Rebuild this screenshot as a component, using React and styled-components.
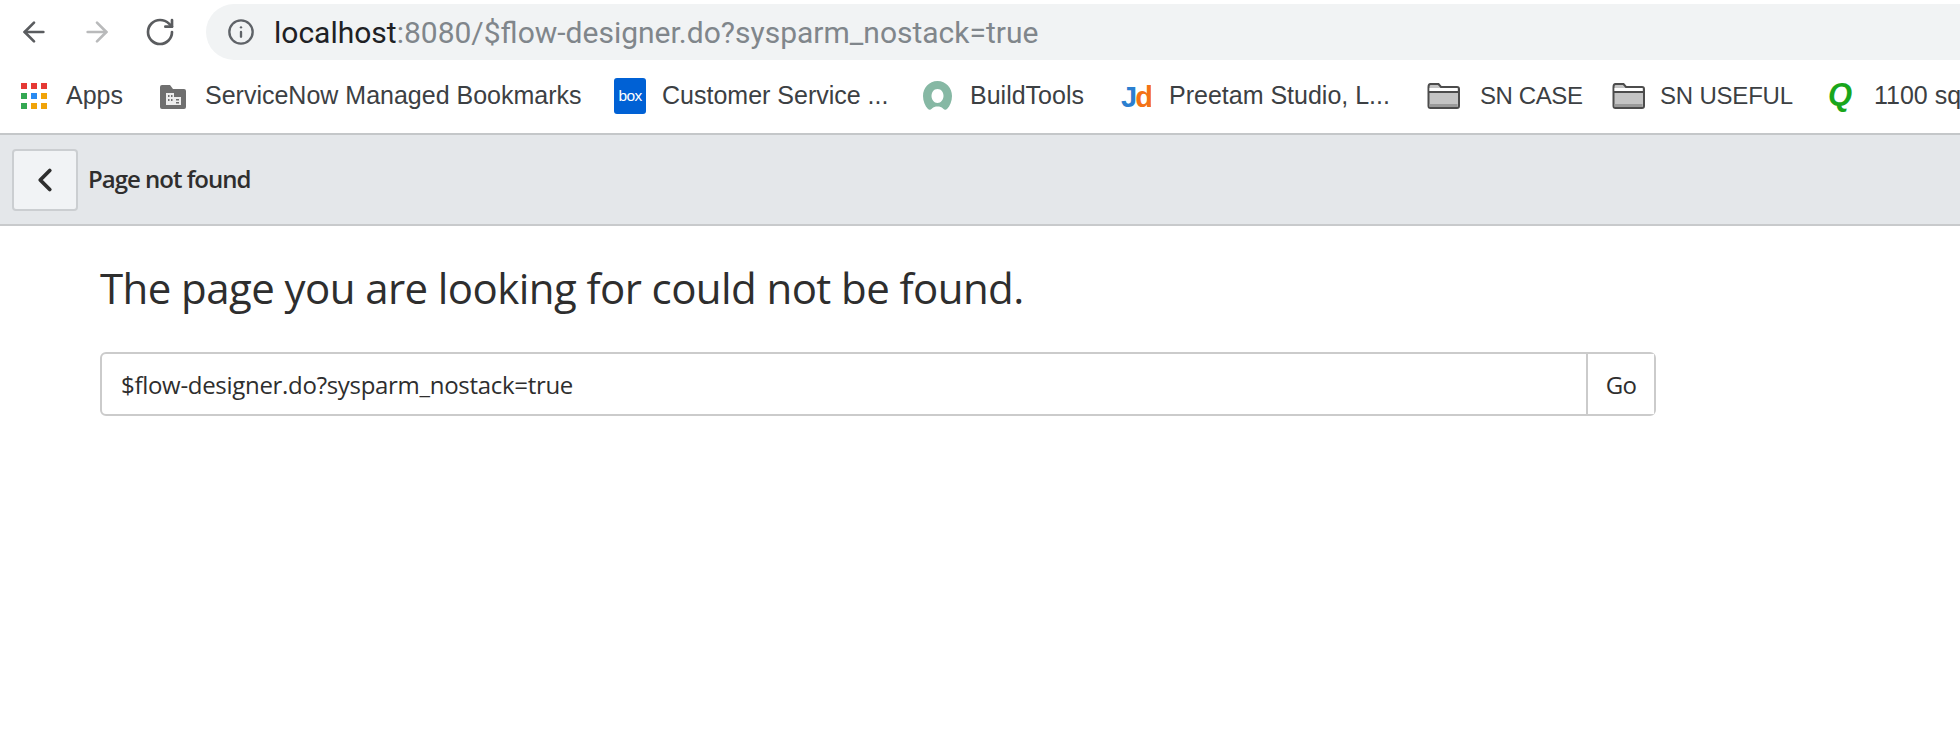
import React from "react";
import styled, { createGlobalStyle } from "styled-components";
import { ArrowLeft, ArrowRight, RotateCw, Info, ChevronLeft } from "lucide-react";

const GlobalStyle = createGlobalStyle`
  html, body {
    margin: 0;
    padding: 0;
    background: #fff;
    overflow: hidden;
  }
`;

const Page = styled.div`
  width: 1960px;
  height: 752px;
  overflow: hidden;
  background: #fff;
`;

const Toolbar = styled.div`
  display: flex;
  align-items: center;
  height: 64px;
  padding-left: 18px;
  box-sizing: border-box;
`;

const NavButton = styled.button`
  display: flex;
  align-items: center;
  justify-content: center;
  width: 32px;
  height: 32px;
  padding: 0;
  margin-right: 31px;
  border: 0;
  background: none;
  color: ${(p) => (p.$disabled ? "#b9babb" : "#5a5c5f")};
`;

const AddressBar = styled.div`
  flex: 1;
  display: flex;
  align-items: center;
  height: 56px;
  margin-left: -1px;
  padding-left: 21px;
  border-radius: 28px 0 0 28px;
  background: #f1f3f4;
  color: #5f6368;
  font: 400 30px Roboto, sans-serif;
`;

const Host = styled.span`
  margin-left: 19px;
  color: #202124;
`;

const Rest = styled.span`
  color: #80868b;
`;

const BookmarkBar = styled.div`
  display: flex;
  align-items: center;
  height: 69px;
  padding: 0 0 6px 21px;
  box-sizing: border-box;
  white-space: nowrap;
  overflow: hidden;
`;

const Bookmark = styled.div`
  flex: none;
  display: flex;
  align-items: center;
  gap: ${(p) => p.$gap || 18}px;
  width: ${(p) => p.$width}px;
  color: #3c4043;
  font: 400 ${(p) => p.$size || 25}px "Liberation Sans", Arial, sans-serif;
  letter-spacing: ${(p) => p.$spacing || 0}px;
`;

const Header = styled.div`
  display: flex;
  align-items: center;
  gap: 11px;
  height: 93px;
  padding-left: 12px;
  box-sizing: border-box;
  background: #e4e7ea;
  border-top: 2px solid #c4c7c9;
  border-bottom: 2px solid #c8cacc;
`;

const BackButton = styled.button`
  display: flex;
  align-items: center;
  justify-content: center;
  width: 66px;
  height: 62px;
  padding: 0;
  box-sizing: border-box;
  background: #f1f3f5;
  border: 2px solid #cbced1;
  border-radius: 4px;
  color: #2e2e2e;
`;

const Title = styled.h1`
  margin: 0 0 2px -1px;
  color: #2e2e2e;
  font: 600 24px "Open Sans", sans-serif;
  letter-spacing: -1px;
`;

const Content = styled.main`
  padding: 33px 0 0 100px;
`;

const Heading = styled.h2`
  margin: 0 0 35px;
  color: #2e2e2e;
  font: 400 42px/58px "Open Sans", sans-serif;
  letter-spacing: -0.58px;
`;

const SearchGroup = styled.form`
  display: flex;
  width: 1556px;
  height: 64px;
  box-sizing: border-box;
  border: 2px solid #cbcbcb;
  border-radius: 6px;
`;

const SearchInput = styled.div`
  flex: 1;
  display: flex;
  align-items: center;
  padding-left: 19px;
  color: #2e2e2e;
  font: 400 24px "Open Sans", sans-serif;
  letter-spacing: -0.3px;
`;

const GoButton = styled.button`
  width: 68px;
  padding: 0;
  border: 0;
  border-left: 2px solid #cbcbcb;
  background: #fff;
  color: #2e2e2e;
  font: 400 24px "Open Sans", sans-serif;
  letter-spacing: -0.6px;
`;

const AppsIcon = () => {
  const colors = ["#e53935", "#e53935", "#e53935", "#34a853", "#2a8af0", "#f0a30a", "#34a853", "#f0a30a", "#f0a30a"];
  return (
    <svg width="26" height="26" viewBox="0 0 26 26">
      {colors.map((c, i) => (
        <rect key={i} x={(i % 3) * 10} y={Math.floor(i / 3) * 10} width="6" height="6" fill={c} />
      ))}
    </svg>
  );
};

const BuildingIcon = () => (
  <svg width="28" height="28" viewBox="0 0 28 28">
    <path d="M1 5q0-2 2-2h8l3 4h11q2 0 2 2v16q0 2-2 2H3q-2 0-2-2z" fill="#6f6f6f" />
    <path d="M7 11h8v12H7zM15 15h7v8h-7z" fill="#eee" />
    <path d="M9 13h1.5v2H9zM12 13h1.5v2H12zM9 17h1.5v2H9zM12 17h1.5v2H12zM17 17h3v1.5h-3zM17 20h3v1.5h-3z" fill="#6f6f6f" />
  </svg>
);

const BoxIcon = () => (
  <svg width="32" height="36" viewBox="0 0 32 36">
    <rect width="32" height="36" rx="3" fill="#0061d5" />
    <text x="16" y="23" textAnchor="middle" fill="#fff" fontFamily="Liberation Sans, sans-serif" fontSize="15.500" letterSpacing="-0.6">box</text>
  </svg>
);

const RingIcon = () => (
  <svg width="31" height="32" viewBox="0 0 31 32">
    <path fillRule="evenodd" d="M15.500 1C24 1 30 8 30 16c0 5-2 10-5 13-1.500 1.500-3 .5-4-.5-1.500-1.500-3.200-2-5.500-2s-4 .5-5.500 2c-1 1-2.500 2-4 .5C3 26 1 21 1 16 1 8 7 1 15.500 1zm0 8c-4 0-6 3.500-6 7s2.500 7 6 7 6-3.500 6-7-2-7-6-7z" fill="#86b8a4" />
  </svg>
);

const JdIcon = () => (
  <svg width="30" height="32" viewBox="0 0 30 32">
    <text x="0" y="27" fontFamily="Liberation Sans, sans-serif" fontSize="29" fontWeight="700" letterSpacing="-2">
      <tspan fill="#2b7fd0">J</tspan>
      <tspan fill="#f47216">d</tspan>
    </text>
  </svg>
);

const FolderIcon = () => (
  <svg width="33" height="28" viewBox="0 0 33 28">
    <path d="M1.500 5q0-3 2-3h8l2.500 3h16q2 0 2 2v17q0 2-2 2H3.500q-2 0-2-2z" fill="#c4c4c4" stroke="#4c4c4c" strokeWidth="2" />
    <path d="M2.500 6h28v3h-28z" fill="#fff" />
    <path d="M2 10h30" stroke="#4c4c4c" strokeWidth="2" />
    <path d="M2.500 22h28v3h-28z" fill="#9a9a9a" />
  </svg>
);

const QIcon = () => (
  <svg width="36" height="38" viewBox="0 0 36 38">
    <text x="1" y="28" fill="#19a61b" fontFamily="Liberation Sans, sans-serif" fontSize="31" fontStyle="italic" fontWeight="700">Q</text>
  </svg>
);

const App = () => {
  return (
    <Page>
      <GlobalStyle />
      <Toolbar>
        <NavButton>
          <ArrowLeft size={36} strokeWidth={2} />
        </NavButton>
        <NavButton $disabled>
          <ArrowRight size={36} strokeWidth={2} />
        </NavButton>
        <NavButton>
          <RotateCw size={32} strokeWidth={2} />
        </NavButton>
        <AddressBar>
          <Info size={28} strokeWidth={2} />
          <Host>localhost</Host>
          <Rest>:8080/$flow-designer.do?sysparm_nostack=true</Rest>
        </AddressBar>
      </Toolbar>
      <BookmarkBar>
        <Bookmark $width={138} $gap={19}><AppsIcon />Apps</Bookmark>
        <Bookmark $width={455}><BuildingIcon />ServiceNow Managed Bookmarks</Bookmark>
        <Bookmark $width={308} $gap={16}><BoxIcon />Customer Service ...</Bookmark>
        <Bookmark $width={199} $gap={17}><RingIcon />BuildTools</Bookmark>
        <Bookmark $width={306} $gap={18}><JdIcon />Preetam Studio, L...</Bookmark>
        <Bookmark $width={185} $gap={20} $size={24} $spacing={-0.4}><FolderIcon />SN CASE</Bookmark>
        <Bookmark $width={215} $gap={15} $size={24} $spacing={-0.2}><FolderIcon />SN USEFUL</Bookmark>
        <Bookmark $gap={11}><QIcon />1100 sq ft</Bookmark>
      </BookmarkBar>
      <Header>
        <BackButton>
          <ChevronLeft size={38} strokeWidth={2.4} />
        </BackButton>
        <Title>Page not found</Title>
      </Header>
      <Content>
        <Heading>The page you are looking for could not be found.</Heading>
        <SearchGroup>
          <SearchInput>$flow-designer.do?sysparm_nostack=true</SearchInput>
          <GoButton type="button">Go</GoButton>
        </SearchGroup>
      </Content>
    </Page>
  );
};

export default App;
